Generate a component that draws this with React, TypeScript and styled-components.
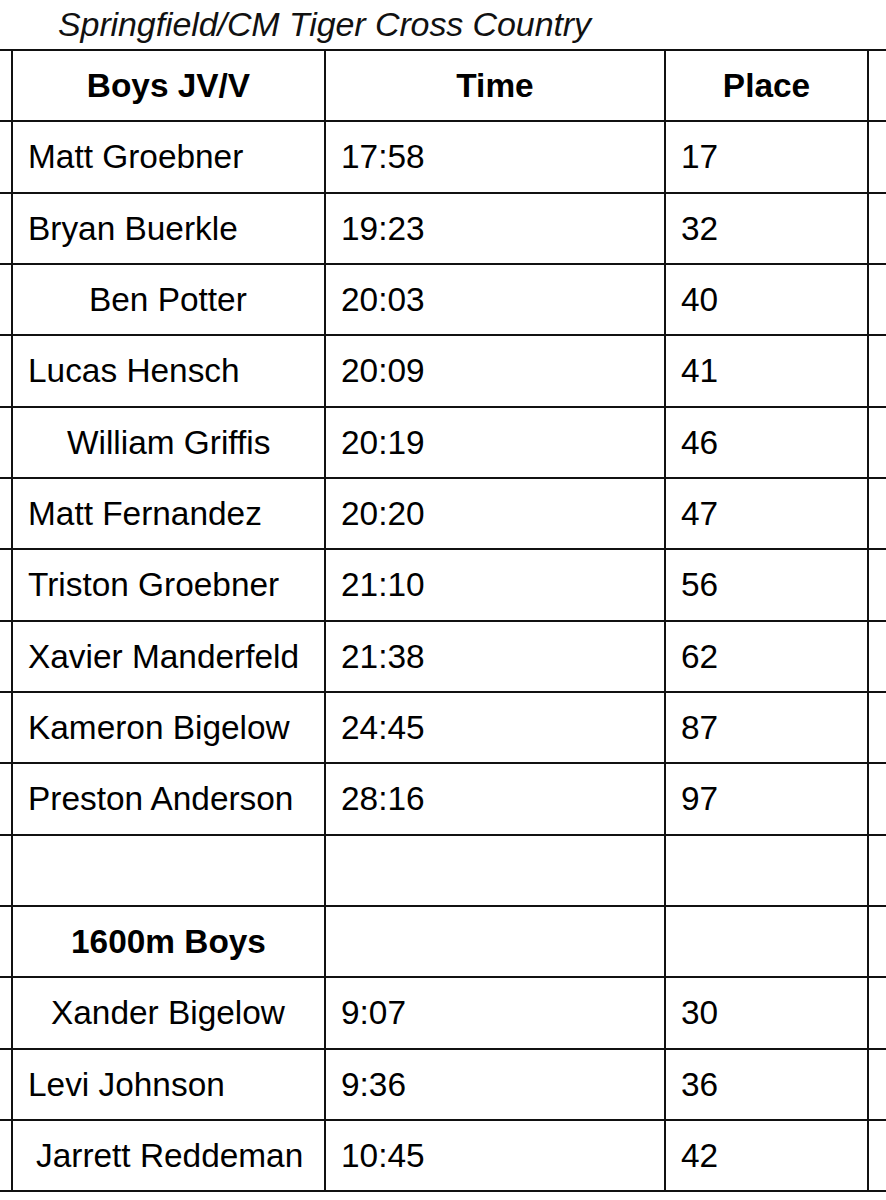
import styled, { createGlobalStyle } from 'styled-components'

const Global = createGlobalStyle`
  html, body {
    margin: 0;
    padding: 0;
    background: #fff;
  }
  body {
    font-family: "Liberation Sans", Arial, sans-serif;
    color: #000;
  }
`

const Page = styled.div`
  width: 886px;
  overflow: hidden;
`

const Title = styled.div`
  height: 49px;
  padding: 3px 0 0 58px;
  box-sizing: border-box;
  font-size: 34px;
  font-style: italic;
  line-height: 42px;
  letter-spacing: -0.1px;
  color: #111;
  white-space: nowrap;
`

const Table = styled.table`
  border-collapse: collapse;
  table-layout: fixed;
  width: 920px;
  font-size: 33.4px;
`

const Row = styled.tr`
  height: 71.33px;
`

const Cell = styled.td<{ $pad?: number; $center?: boolean; $bold?: boolean }>`
  border: 2px solid #111;
  padding: 0 0 0 ${(p) => p.$pad ?? 15}px;
  text-align: ${(p) => (p.$center ? 'center' : 'left')};
  font-weight: ${(p) => (p.$bold ? 700 : 400)};
  vertical-align: middle;
  white-space: nowrap;
  overflow: hidden;
  line-height: 1;
`

const Edge = styled.td`
  border: 2px solid #111;
  padding: 0;

  &:first-child {
    border-left: none;
  }
`

type Runner = { name: string; time: string; place: string; pad?: number }

const boys: Runner[] = [
  { name: 'Matt Groebner', time: '17:58', place: '17' },
  { name: 'Bryan Buerkle', time: '19:23', place: '32' },
  { name: 'Ben Potter', time: '20:03', place: '40', pad: 76 },
  { name: 'Lucas Hensch', time: '20:09', place: '41' },
  { name: 'William Griffis', time: '20:19', place: '46', pad: 54 },
  { name: 'Matt Fernandez', time: '20:20', place: '47' },
  { name: 'Triston Groebner', time: '21:10', place: '56' },
  { name: 'Xavier Manderfeld', time: '21:38', place: '62' },
  { name: 'Kameron Bigelow', time: '24:45', place: '87' },
  { name: 'Preston Anderson', time: '28:16', place: '97' },
]

const mile: Runner[] = [
  { name: 'Xander Bigelow', time: '9:07', place: '30', pad: 38 },
  { name: 'Levi Johnson', time: '9:36', place: '36' },
  { name: 'Jarrett Reddeman', time: '10:45', place: '42', pad: 23 },
]

function RunnerRow({ r }: { r: Runner }) {
  return (
    <Row>
      <Edge />
      <Cell $pad={r.pad}>{r.name}</Cell>
      <Cell>{r.time}</Cell>
      <Cell>{r.place}</Cell>
      <Edge />
    </Row>
  )
}

export default function App() {
  return (
    <>
      <Global />
      <Page>
        <Title>Springfield/CM Tiger Cross Country</Title>
        <Table>
          <colgroup>
            <col style={{ width: 12 }} />
            <col style={{ width: 313 }} />
            <col style={{ width: 340 }} />
            <col style={{ width: 203 }} />
            <col style={{ width: 52 }} />
          </colgroup>
          <tbody>
            <Row>
              <Edge />
              <Cell $center $bold $pad={0}>Boys JV/V</Cell>
              <Cell $center $bold $pad={0}>Time</Cell>
              <Cell $center $bold $pad={0}>Place</Cell>
              <Edge />
            </Row>
            {boys.map((r) => (
              <RunnerRow key={r.name} r={r} />
            ))}
            <Row>
              <Edge />
              <Cell />
              <Cell />
              <Cell />
              <Edge />
            </Row>
            <Row>
              <Edge />
              <Cell $center $bold $pad={0}>1600m Boys</Cell>
              <Cell />
              <Cell />
              <Edge />
            </Row>
            {mile.map((r) => (
              <RunnerRow key={r.name} r={r} />
            ))}
          </tbody>
        </Table>
      </Page>
    </>
  )
}
